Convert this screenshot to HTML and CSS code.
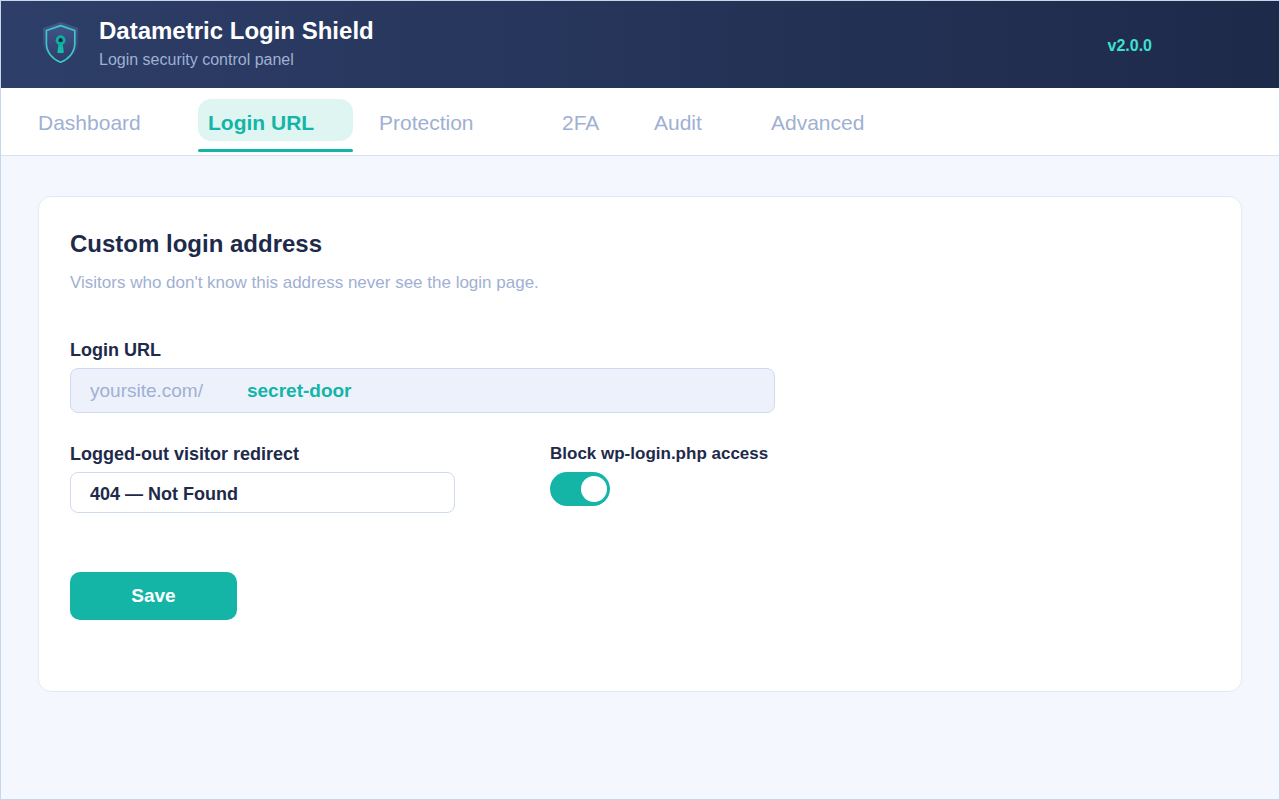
FILE: index.html
```html
<!DOCTYPE html>
<html lang="en">
<head>
<meta charset="utf-8">
<meta name="viewport" content="width=device-width, initial-scale=1">
<title>Datametric Login Shield</title>
<link rel="stylesheet" href="styles.css">
</head>
<body>
<div class="app">
  <header class="header">
    <svg class="logo" viewBox="0 0 36 44" aria-hidden="true">
      <defs>
        <linearGradient id="shield" x1="0" y1="0" x2="0" y2="1">
          <stop offset="0" stop-color="#43568c"/>
          <stop offset="1" stop-color="#2c3b66"/>
        </linearGradient>
        <linearGradient id="key" x1="0" y1="0" x2="0" y2="1">
          <stop offset="0" stop-color="#10ae9e"/>
          <stop offset="1" stop-color="#17bfae"/>
        </linearGradient>
      </defs>
      <path d="M17.600 1 L35.200 7 V22 C35.200 31.500 27.500 39 17.600 43 C7.700 39 0 31.500 0 22 V7 Z" fill="url(#shield)"/>
      <path d="M17.600 4.600 L31.800 9.500 V22.500 C31.800 31.500 25.200 38.500 17.600 41.200 C10 38.500 3.400 31.500 3.400 22.500 V9.500 Z" fill="none" stroke="#3cc8c4" stroke-width="1.700" stroke-linejoin="round"/>
      <path d="M15.600 22 H19.600 L20.800 31 Q20.800 32 19.800 32 H15.400 Q14.400 32 14.400 31 Z" fill="url(#key)"/>
      <circle cx="17.600" cy="19.200" r="4.900" fill="#10ae9e"/>
      <circle cx="17.600" cy="19.200" r="2.100" fill="#1e2a4a"/>
    </svg>
    <div class="brand">
      <h1 class="brand-title">Datametric Login Shield</h1>
      <p class="brand-subtitle">Login security control panel</p>
    </div>
    <span class="version">v2.0.0</span>
  </header>
  <nav class="tabs" aria-label="Sections">
    <a class="tab" href="#dashboard">Dashboard</a>
    <a class="tab tab-active" href="#login-url" aria-current="page">Login URL</a>
    <a class="tab" href="#protection">Protection</a>
    <a class="tab" href="#2fa">2FA</a>
    <a class="tab" href="#audit">Audit</a>
    <a class="tab" href="#advanced">Advanced</a>
  </nav>
  <main class="main">
    <form class="card">
      <h2 class="card-title">Custom login address</h2>
      <p class="card-text">Visitors who don't know this address never see the login page.</p>
      <div class="fields">
        <div class="field field-wide">
          <label class="label" for="slug">Login URL</label>
          <div class="url-box">
            <span class="url-prefix">yoursite.com/</span>
            <input class="url-input" id="slug" type="text" value="secret-door">
          </div>
        </div>
        <div class="field">
          <label class="label" for="redirect">Logged-out visitor redirect</label>
          <select class="select" id="redirect">
            <option>404 — Not Found</option>
          </select>
        </div>
        <div class="field">
          <label class="label label-toggle" for="block">Block wp-login.php access</label>
          <input class="toggle" id="block" type="checkbox" role="switch" checked>
        </div>
      </div>
      <button class="save" type="button">Save</button>
    </form>
  </main>
</div>
</body>
</html>
```
FILE: styles.css
```css
* {
  box-sizing: border-box;
}

body {
  margin: 0;
  font-family: "Liberation Sans", Arial, sans-serif;
  color: #1e2a4a;
}

h1, h2, p {
  margin: 0;
}

input, select, button {
  font-family: inherit;
}

.app {
  min-height: 100vh;
  border: 1px solid #c8d6ea;
  background: #f4f7fd;
}

.header {
  display: flex;
  align-items: center;
  gap: 20px;
  padding: 14px 127px 15px 42px;
  background: linear-gradient(90deg, #2d3e68, #1e2a4a);
}

.logo {
  flex: none;
  width: 36px;
  height: 44px;
  margin-bottom: 2px;
}

.brand {
  flex: 1;
}

.brand-title {
  font-size: 24px;
  line-height: 32px;
  color: #fff;
}

.brand-subtitle {
  font-size: 16px;
  line-height: 26px;
  color: #9fb0d3;
}

.version {
  padding-top: 4px;
  font-size: 16px;
  line-height: 20px;
  font-weight: bold;
  color: #3fe0d0;
}

.tabs {
  display: grid;
  grid-template-columns: 154px 155px 167px 76px 101px auto;
  justify-content: start;
  column-gap: 16px;
  padding: 11px 27px 14px;
  border-bottom: 1px solid #dbe2ee;
  background: #fff;
}

.tab {
  position: relative;
  padding: 12px 10px 6px;
  border-radius: 13px;
  font-size: 21px;
  line-height: 24px;
  color: #9fb0d3;
  text-decoration: none;
}

.tab-active {
  background: #def5f2;
  color: #14b5a7;
  font-weight: bold;
}

.tab-active::after {
  content: "";
  position: absolute;
  right: 0;
  bottom: -11px;
  left: 0;
  height: 3px;
  border-radius: 2px;
  background: #14b5a7;
}

.main {
  padding: 40px 37px;
}

.card {
  padding: 31px 31px 71px;
  border: 1px solid #e4eaf5;
  border-radius: 13px;
  background: #fff;
}

.card-title {
  font-size: 24px;
  line-height: 32px;
}

.card-text {
  margin-top: 11px;
  font-size: 17px;
  line-height: 24px;
  color: #9fb0d3;
}

.fields {
  display: grid;
  grid-template-columns: 385px 225px;
  column-gap: 95px;
  row-gap: 31px;
  margin-top: 45px;
}

.field {
  display: flex;
  flex-direction: column;
  align-items: flex-start;
  gap: 8px;
}

.field-wide {
  grid-column: 1 / -1;
}

.label {
  font-size: 18px;
  line-height: 20px;
  font-weight: bold;
}

.label-toggle {
  font-size: 17px;
  white-space: nowrap;
}

.url-box {
  display: flex;
  align-items: center;
  gap: 44px;
  width: 100%;
  height: 45px;
  padding: 0 19px;
  border: 1px solid #cfdaee;
  border-radius: 8px;
  background: #edf1fb;
  font-size: 19px;
}

.url-prefix {
  color: #9fb0d3;
}

.url-input {
  flex: 1;
  min-width: 0;
  padding: 0;
  border: 0;
  background: none;
  color: #14b5a7;
  font-size: 19px;
  font-weight: bold;
}

.select {
  appearance: none;
  width: 100%;
  height: 41px;
  padding: 2px 19px 0;
  border: 1px solid #cfdaee;
  border-radius: 8px;
  background: #fff;
  color: #1e2a4a;
  font-size: 18px;
  font-weight: bold;
}

.toggle {
  appearance: none;
  display: flex;
  align-items: center;
  width: 60px;
  height: 34px;
  margin: 0;
  padding: 3px;
  border-radius: 17px;
  background: #c8d6ea;
}

.toggle::before {
  content: "";
  width: 26px;
  height: 26px;
  border-radius: 50%;
  background: #fff;
}

.toggle:checked {
  justify-content: flex-end;
  background: #14b5a7;
}

.save {
  width: 167px;
  height: 48px;
  margin-top: 59px;
  padding: 0;
  border: 0;
  border-radius: 10px;
  background: #14b5a7;
  color: #fff;
  font-size: 19px;
  font-weight: bold;
}
```
